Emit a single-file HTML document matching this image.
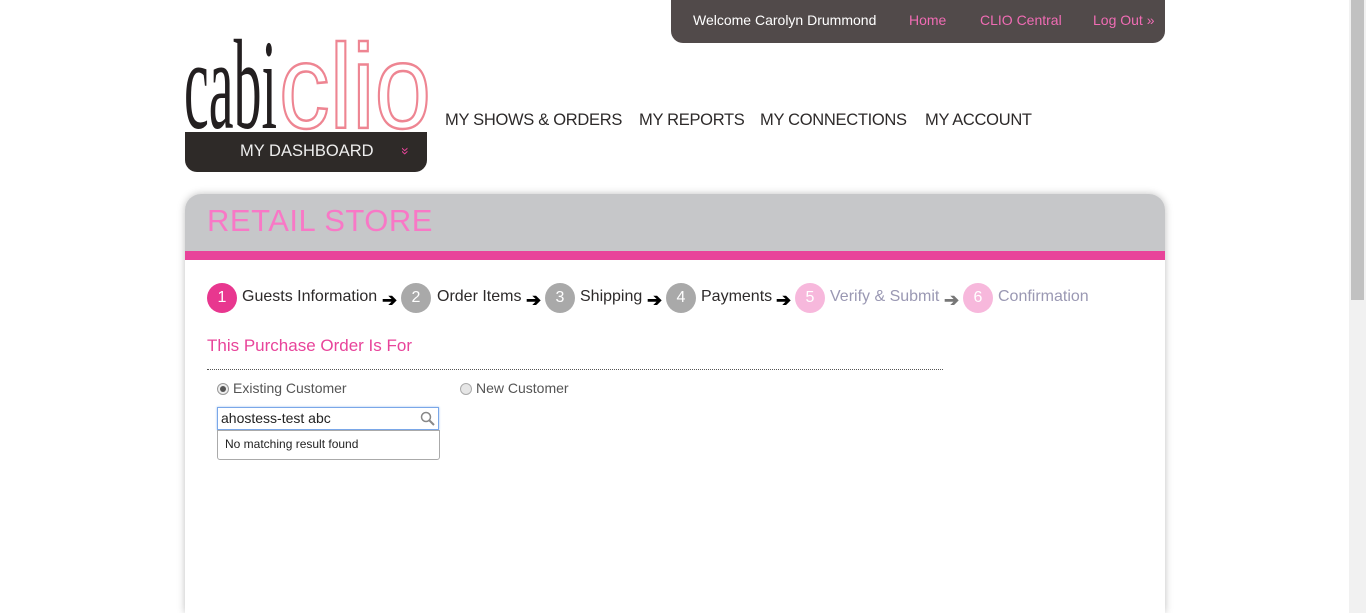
<!DOCTYPE html>
<html><head><meta charset="utf-8"><style>
html,body{margin:0;width:1366px;height:613px;overflow:hidden}
body{background:#fff;font-family:"Liberation Sans",sans-serif;position:relative}
.a{position:absolute;white-space:nowrap}
.top{left:671px;top:0;width:494px;height:43px;background:#514a4a;border-radius:0 0 12px 12px}
.top span{position:absolute;top:12px;font-size:14px}
.nav{top:111px;font-size:16.5px;color:#2d2a2a;letter-spacing:-0.3px}
.dash{left:185px;top:132px;width:242px;height:40px;background:#2e2a28;border-radius:0 0 12px 12px;color:#eee;font-size:16.5px}
.card{left:185px;top:194px;width:980px;height:419px;background:#fff;border-radius:16px 16px 0 0;box-shadow:0 0 8px rgba(0,0,0,.25);overflow:hidden}
.hd{height:57px;background:#c6c7c9;position:relative}
.band{height:9px;background:#e8449a}
.c{position:absolute;top:283px;width:30px;height:30px;border-radius:50%;color:#fff;font-size:16px;text-align:center;line-height:29px}
.l{position:absolute;top:288px;font-size:16px;color:#2d2a2a}
.ar{position:absolute;top:290px;font-size:18px;font-weight:bold}
.sb{left:1349px;top:0;width:17px;height:613px;background:#f1f1f1}
</style></head><body>
<div class="a top">
<span style="left:22px;color:#fff">Welcome Carolyn Drummond</span>
<span style="left:238px;color:#f06cb4">Home</span>
<span style="left:309px;color:#f06cb4">CLIO Central</span>
<span style="left:422px;color:#f06cb4">Log Out »</span>
</div>
<svg class="a" style="left:183px;top:30px" width="250" height="102">
<text x="1" y="98" font-family="Liberation Serif,serif" font-size="128" textLength="93" lengthAdjust="spacingAndGlyphs" fill="#231f20">cabi</text>
<text x="96" y="98" font-family="Liberation Sans,sans-serif" font-size="120" textLength="152" lengthAdjust="spacingAndGlyphs" fill="none" stroke="#ee8592" stroke-width="2.5">clio</text>
</svg>
<div class="a dash"><span style="position:absolute;left:55px;top:10px">MY DASHBOARD</span><span style="position:absolute;left:217px;top:11px;color:#e8449a;font-size:14px;transform:rotate(90deg)">»</span></div>
<div class="a nav" style="left:445px">MY SHOWS &amp; ORDERS</div>
<div class="a nav" style="left:639px">MY REPORTS</div>
<div class="a nav" style="left:760px">MY CONNECTIONS</div>
<div class="a nav" style="left:925px">MY ACCOUNT</div>
<div class="a card"><div class="hd"><span style="position:absolute;left:22px;top:9px;font-size:31px;color:#f878c6;letter-spacing:0.5px">RETAIL STORE</span></div><div class="band"></div></div>
<div class="c" style="left:207px;background:#e8378f">1</div><div class="l" style="left:242px">Guests Information</div><div class="ar" style="left:382px">➔</div>
<div class="c" style="left:401px;background:#a9a9a9">2</div><div class="l" style="left:437px">Order Items</div><div class="ar" style="left:526px">➔</div>
<div class="c" style="left:545px;background:#a9a9a9">3</div><div class="l" style="left:580px">Shipping</div><div class="ar" style="left:647px">➔</div>
<div class="c" style="left:666px;background:#a9a9a9">4</div><div class="l" style="left:701px">Payments</div><div class="ar" style="left:776px">➔</div>
<div class="c" style="left:795px;background:#f7b8dc">5</div><div class="l" style="left:830px;color:#9a98b3">Verify &amp; Submit</div><div class="ar" style="left:944px;color:#777">➔</div>
<div class="c" style="left:963px;background:#f7b8dc">6</div><div class="l" style="left:998px;color:#9a98b3">Confirmation</div>
<div class="a" style="left:207px;top:336px;font-size:17px;color:#e8449a">This Purchase Order Is For</div>
<div class="a" style="left:207px;top:369px;width:736px;border-top:1px dotted #555"></div>
<div class="a" style="left:217px;top:383px;width:10px;height:10px;border:1px solid #999;border-radius:50%;background:#eee"><div style="margin:2px;width:6px;height:6px;border-radius:50%;background:#555"></div></div>
<div class="a" style="left:233px;top:380px;font-size:14px;color:#555">Existing Customer</div>
<div class="a" style="left:460px;top:383px;width:10px;height:10px;border:1px solid #aaa;border-radius:50%;background:#e6e6e6"></div>
<div class="a" style="left:476px;top:380px;font-size:14px;color:#555">New Customer</div>
<div class="a" style="left:217px;top:407px;width:220px;height:21px;border:1px solid #7aa7e8;box-shadow:0 0 2px #9cc0f0"><span style="position:absolute;left:3px;top:2px;font-size:14px;color:#222">ahostess-test abc</span>
<svg style="position:absolute;right:3px;top:3px" width="15" height="15"><circle cx="6" cy="6" r="4.5" fill="none" stroke="#888" stroke-width="1.5"/><path d="M9.5 9.5L14 14" stroke="#888" stroke-width="2"/></svg></div>
<div class="a" style="left:217px;top:430px;width:221px;height:28px;border:1px solid #aaa;border-radius:0 0 3px 3px;background:#fff"><span style="position:absolute;left:7px;top:6px;font-size:12px;color:#222">No matching result found</span></div>
<div class="a sb"><div style="margin-left:2px;width:13px;height:300px;background:#c1c1c1"></div></div>
</body></html>
